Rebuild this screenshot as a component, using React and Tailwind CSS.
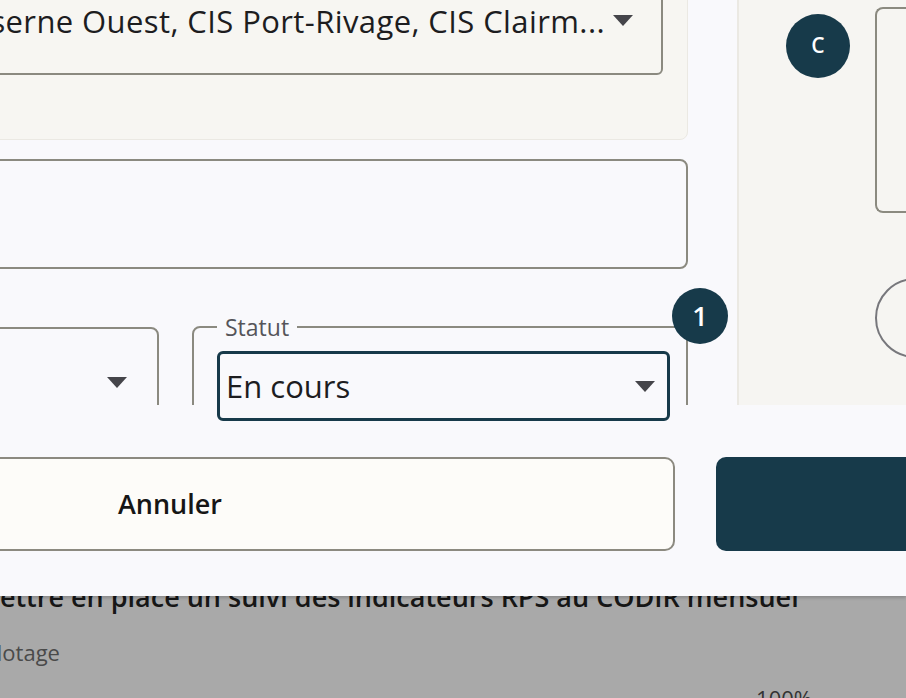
const FONT = "font-['Open_Sans','Noto_Sans',sans-serif]"

// small solid caret used by the selects
function Caret() {
  return (
    <svg width="20" height="11" viewBox="0 0 20 11" className="shrink-0">
      <path d="M0 0 L20 0 L10 11 Z" fill="#45454a" />
    </svg>
  )
}

function PageBehind() {
  return (
    <div className="pt-[581px] text-[#161616]">
      <div className="-ml-[25px] whitespace-nowrap text-[27px] font-semibold leading-[32px]">
        Mettre en place un suivi des indicateurs RPS au CODIR mensuel
      </div>
      <div className="mt-[25px] -ml-[22px] text-[22px] leading-[28px] text-[#4a4a4a]">Pilotage</div>
      <div className="mt-[18px] flex justify-end pr-[94px] text-[22px] leading-[28px] text-[#333]">100%</div>
    </div>
  )
}

function FormColumn() {
  return (
    <div className="-ml-[300px] -mt-[60px] w-[1037px] shrink-0 pr-[49px]">
      {/* centres selection card */}
      <div className="h-[200px] rounded-br-lg border border-[#ebe9e3] bg-[#f7f6f2] pr-[24px] pt-[33px]">
        <div className="flex h-[101px] items-center justify-end gap-[8px] rounded-md border-2 border-[#8b8a80] pb-[8px] pr-[28px]">
          <span className="whitespace-nowrap text-[31px] leading-[36px] tracking-[0.4px] text-[#1d1d1f]">
            CIS Caserne Ouest, CIS Port-Rivage, CIS Clairm...
          </span>
          <Caret />
        </div>
      </div>

      {/* description */}
      <div className="mt-[19px] h-[110px] rounded-lg border-2 border-[#8b8a80] bg-[#f9f9fc]" />

      {/* row: échéance + statut */}
      <div className="mt-[58px] flex items-start gap-[33px]">
        <div className="flex h-[120px] w-[459px] items-start justify-end rounded-tr-lg border-2 border-[#8b8a80] pr-[30px] pt-[48px]">
          <Caret />
        </div>
        <fieldset className="-mt-[14px] h-[130px] flex-1 rounded-t-lg border-2 border-[#8b8a80] px-[23px]">
          <legend className="px-[8px] text-[23px] leading-[28px] text-[#55555a]">Statut</legend>
          <div className="mt-[9px] h-[70px]" />
        </fieldset>
      </div>
    </div>
  )
}

function SidePanel() {
  return (
    <div className="flex flex-1 gap-[25px] border-l-2 border-[#ebe9e3] bg-[#f6f5f2] pl-[47px] pt-[14px]">
      <div className="grid h-[64px] w-[64px] shrink-0 place-items-center rounded-full bg-[#173a4a] text-[21px] font-semibold text-white">
        C
      </div>
      <div className="-mt-[7px] flex flex-1 flex-col">
        <div className="h-[206px] rounded-l-lg border-2 border-r-0 border-[#8b8a80]" />
        <div className="mt-[65px] h-[80px] w-[80px] rounded-full border-2 border-[#77777c]" />
      </div>
    </div>
  )
}

export default function App() {
  return (
    <div className={`relative h-[698px] w-[906px] overflow-hidden bg-[#a9a9a9] ${FONT}`}>
      <PageBehind />

      {/* modal */}
      <div className="absolute inset-x-0 top-0 flex h-[596px] flex-col bg-[#f9f9fc] shadow-[0_2px_3px_rgba(0,0,0,0.18)]">
        <div className="flex h-[405px] overflow-hidden">
          <FormColumn />
          <SidePanel />
        </div>

        <div className="flex gap-[41px] pt-[52px]">
          <button className="-ml-[335px] h-[94px] w-[1010px] shrink-0 rounded-[10px] border-2 border-[#8c8a80] bg-[#fdfcf9] text-[27px] font-semibold text-[#161616]">
            Annuler
          </button>
          <button className="h-[94px] w-[400px] shrink-0 rounded-[10px] bg-[#173a4a]" />
        </div>

        {/* guided tour spotlight on the status field */}
        <div className="absolute left-[217px] top-[351px] flex h-[70px] w-[453px] items-center justify-between rounded-md border-[3px] border-[#173a4a] bg-[#f9f9fc] pl-[6px] pr-[12px]">
          <span className="text-[31px] leading-[36px] text-[#1d1d1f]">En cours</span>
          <Caret />
        </div>
        <div className="absolute left-[672px] top-[288px] grid h-[56px] w-[56px] place-items-center rounded-full bg-[#173a4a] text-[27px] font-semibold text-white">
          1
        </div>
      </div>
    </div>
  )
}
